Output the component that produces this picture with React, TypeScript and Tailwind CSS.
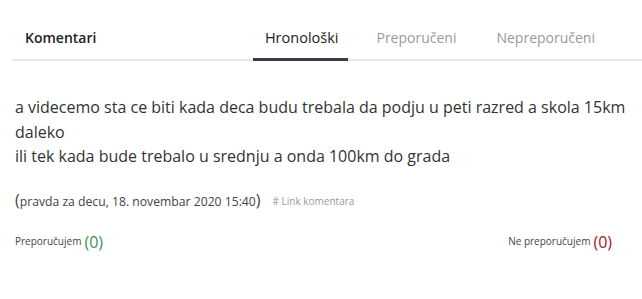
import React from "react";

export default function App() {
  const font = { fontFamily: '"Open Sans", "Noto Sans", sans-serif' };
  return (
    <div className="w-[642px] h-[299px] bg-white text-[#333]" style={font}>
      <div className="ml-3 pt-[27px] flex items-end border-b-2 border-[#e8e8e8]">
        <div className="pl-[13px] pb-[10px] text-[14px] leading-[22px] font-semibold text-[#222]">
          Komentari
        </div>
        <div className="ml-auto mr-[35px] flex gap-4">
          <div className="relative pl-3 pr-[10px] pb-[10px] text-[14.5px] leading-[22px] text-[#222]">
            Hronološki
            <div className="absolute left-0 right-0 -bottom-[2px] h-[3px] bg-[#3b3b4a]" />
          </div>
          <div className="px-3 pb-[10px] text-[14px] leading-[22px] text-[#999]">Preporučeni</div>
          <div className="px-3 pb-[10px] text-[14px] leading-[22px] text-[#999]">Nepreporučeni</div>
        </div>
      </div>
      <div className="px-[15px] pt-[34px]">
        <p className="text-[16px] leading-[24.5px] text-[#333]">
          a videcemo sta ce biti kada deca budu trebala da podju u peti razred a skola 15km daleko
          <br />
          ili tek kada bude trebalo u srednju a onda 100km do grada
        </p>
        <div className="mt-[21px] flex items-center">
          <span className="text-[12.2px] leading-[20px] text-[#444]">
            <span className="text-[16px]">(</span>pravda za decu, 18. novembar 2020 15:40
            <span className="text-[16px]">)</span>
          </span>
          <span className="ml-[12px] text-[10px] leading-[14px] text-[#999]"># Link komentara</span>
        </div>
        <div className="mt-[20px] pr-[15px] flex items-center justify-between">
          <div className="flex items-center gap-[3px]">
            <span className="text-[10px] text-[#444]">Preporučujem</span>
            <span className="text-[16px] leading-[20px] text-[#3f8f5a]">(0)</span>
          </div>
          <div className="flex items-center gap-[3px]">
            <span className="text-[10px] text-[#444]">Ne preporučujem</span>
            <span className="text-[16px] leading-[20px] text-[#a02030]">(0)</span>
          </div>
        </div>
      </div>
    </div>
  );
}
